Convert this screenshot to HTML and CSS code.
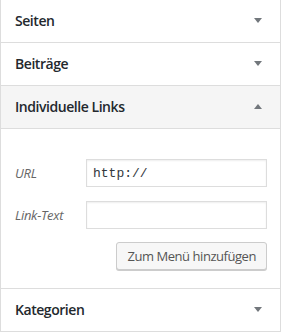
FILE: index.html
```html
<!DOCTYPE html>
<html lang="de">
  <head>
    <meta charset="UTF-8" />
    <meta name="viewport" content="width=device-width, initial-scale=1.0" />
    <title>Menüs</title>
    <link rel="stylesheet" href="styles.css">
  </head>
  <body>
    <div class="accordion">
      <div class="section">
        <h3 class="section-title">Seiten <span class="arrow down"></span></h3>
      </div>
      <div class="section">
        <h3 class="section-title">Beiträge <span class="arrow down"></span></h3>
      </div>
      <div class="section open">
        <h3 class="section-title">Individuelle Links <span class="arrow up"></span></h3>
        <div class="section-content">
          <div class="field">
            <label for="url">URL</label>
            <input type="text" id="url" class="code" value="http://" />
          </div>
          <div class="field">
            <label for="linktext">Link-Text</label>
            <input type="text" id="linktext" />
          </div>
          <div class="actions">
            <button>Zum Menü hinzufügen</button>
          </div>
        </div>
      </div>
      <div class="section">
        <h3 class="section-title">Kategorien <span class="arrow down"></span></h3>
      </div>
    </div>
  </body>
</html>
```

FILE: styles.css
```css
* {
  margin: 0;
  padding: 0;
  box-sizing: border-box;
}
body,
html {
  width: 100%;
  height: 100%;
  overflow: hidden;
  background: #fff;
  font-family: "Open Sans", sans-serif;
}
.accordion {
  width: 281px;
  border-left: 1px solid #ddd;
  border-right: 1px solid #ddd;
}
.section {
  border-bottom: 1px solid #ddd;
}
.section-title {
  display: flex;
  justify-content: space-between;
  align-items: center;
  padding: 10px 18px 11px 14px;
  line-height: 21px;
  font-size: 14px;
  font-weight: 600;
  letter-spacing: -0.45px;
  color: #23282d;
}
.open .section-title {
  background: #f5f5f5;
  border-bottom: 1px solid #ddd;
}
.arrow {
  width: 0;
  height: 0;
  border-left: 4px solid transparent;
  border-right: 4px solid transparent;
}
.arrow.down {
  border-top: 5px solid #72777c;
}
.arrow.up {
  border-bottom: 5px solid #72777c;
}
.section-content {
  padding: 30px 13px 18px 14px;
}
.field {
  display: grid;
  grid-template-columns: 71px 181px;
  align-items: center;
  margin-bottom: 14px;
}
label {
  font-size: 13px;
  font-style: italic;
  letter-spacing: -0.3px;
  color: #666;
}
input {
  height: 28px;
  padding: 0 6px;
  font-size: 14px;
  font-family: "Open Sans", sans-serif;
  border: 1px solid #ddd;
  box-shadow: inset 0 1px 2px rgba(0, 0, 0, 0.07);
  outline: none;
  color: #32373c;
}
input.code {
  font-family: "Liberation Mono", monospace;
  font-size: 13px;
}
.actions {
  display: flex;
  justify-content: flex-end;
  margin-top: -1px;
}
button {
  height: 28px;
  padding: 0 10px;
  font-family: "Open Sans", sans-serif;
  font-size: 13px;
  letter-spacing: -0.45px;
  color: #555;
  background: #f7f7f7;
  border: 1px solid #ccc;
  border-radius: 3px;
  box-shadow: 0 1px 0 #ccc;
  cursor: pointer;
}
```
